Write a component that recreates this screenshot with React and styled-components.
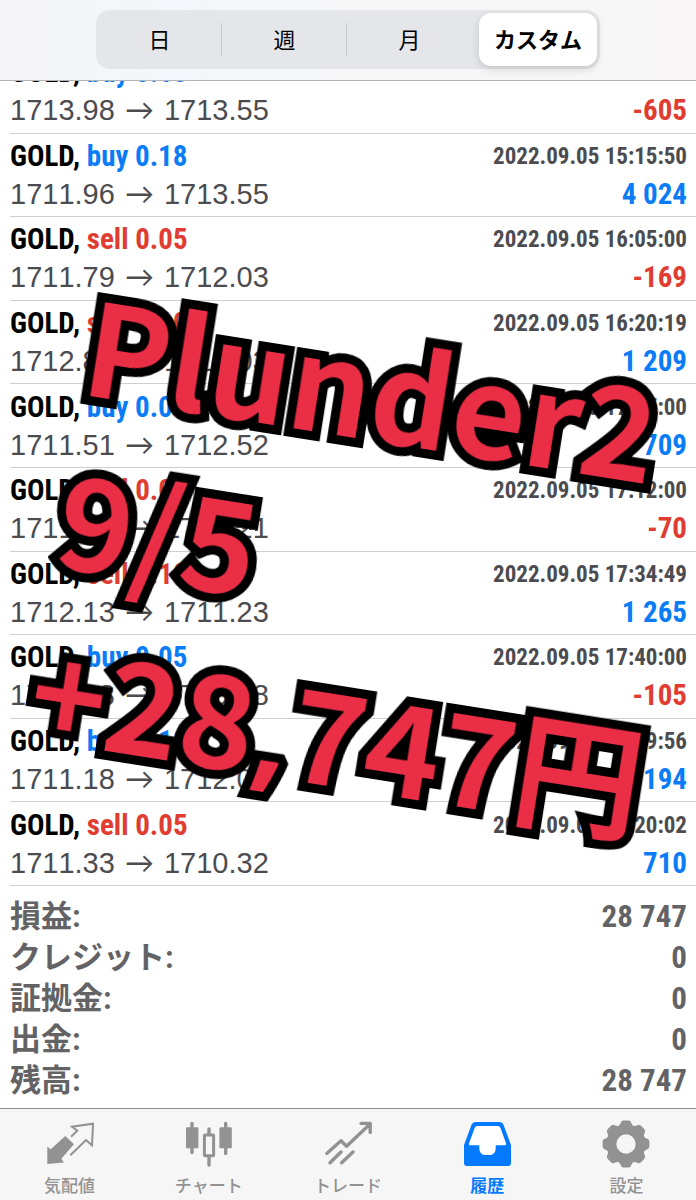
import React, { useState } from 'react'
import styled, { createGlobalStyle } from 'styled-components'

const colors = {
  buy: '#0a7cf5',
  sell: '#e03c31',
  ink: '#000',
  text: '#4c4c50',
  muted: '#636366',
  tab: '#929292',
  line: '#cfcfd2',
  banner: '#ea2e46',
}

const fonts = {
  ui: "'Liberation Sans', 'Noto Sans CJK JP', sans-serif",
  narrow: "'Roboto Condensed', 'Noto Sans CJK JP', sans-serif",
  jp: "'Noto Sans CJK JP', sans-serif",
}

const GlobalStyle = createGlobalStyle`
  * {
    box-sizing: border-box;
  }
  body {
    margin: 0;
    background: #fff;
    font-family: ${fonts.ui};
  }
`

const Page = styled.div`
  position: relative;
  display: flex;
  flex-direction: column;
  min-height: 100vh;
  overflow: hidden;
`

const Header = styled.header`
  position: sticky;
  top: 0;
  z-index: 1;
  display: flex;
  justify-content: center;
  height: 81px;
  padding: 10px 16px;
  background: linear-gradient(90deg, #f5f5f7, #f3f6fa 25%, #f6f6f7 50%, #f8f6f6);
  border-bottom: 1px solid #b4b4b6;
`

const Segments = styled.div`
  display: grid;
  grid-template-columns: repeat(4, 1fr);
  width: 100%;
  max-width: 504px;
  height: 59px;
  padding: 3px 3px 3px 1px;
  border-radius: 14px;
  background: #e5e6e9;
`

const Segment = styled.button`
  position: relative;
  padding: 0 0 4px;
  border: 0;
  border-radius: 12px;
  background: ${(p) => (p.$active ? '#fff' : 'transparent')};
  box-shadow: ${(p) => (p.$active ? '0 3px 8px rgba(0, 0, 0, 0.14)' : 'none')};
  color: ${colors.ink};
  font-family: ${fonts.jp};
  font-size: 22px;
  font-weight: ${(p) => (p.$active ? 700 : 400)};
  line-height: 32px;
  margin-left: ${(p) => (p.$active ? '7px' : 0)};

  &::after {
    content: '';
    position: absolute;
    top: 10px;
    right: 0;
    bottom: 10px;
    width: 1px;
    background: ${(p) => (p.$divider ? '#c8c9cc' : 'transparent')};
  }
`

const Deals = styled.ul`
  display: flex;
  flex: 1;
  flex-direction: column;
  margin: -31px 0 0 10px;
  padding: 0;
  list-style: none;
`

const Deal = styled.li`
  display: flex;
  flex: 1;
  flex-direction: column;
  justify-content: center;
  padding-right: 9px;
  border-bottom: 1px solid ${colors.line};
`

const Line = styled.div`
  display: flex;
  justify-content: space-between;
  height: 38px;
  line-height: 38px;
  white-space: nowrap;
`

const Symbol = styled.span`
  color: ${colors.ink};
  font-family: ${fonts.narrow};
  font-size: 29px;
  font-weight: 700;
`

const Side = styled.span`
  color: ${(p) => colors[p.$side]};
`

const Time = styled.time`
  color: ${colors.text};
  font-family: ${fonts.narrow};
  font-size: 23px;
  font-weight: 700;
  line-height: 40px;
`

const Prices = styled.span`
  color: ${colors.text};
  font-size: 29px;
  font-kerning: none;
  line-height: 36px;
`

const Arrow = styled.span`
  margin: 0 2px;
  font-family: Lato, sans-serif;
`

const Profit = styled.span`
  color: ${(p) => (p.$loss ? colors.sell : colors.buy)};
  font-family: ${fonts.narrow};
  font-size: 29px;
  font-weight: 700;
`

const Summary = styled.dl`
  margin: 0;
  padding: 10px 9px 7px 10px;
`

const SummaryRow = styled.div`
  display: flex;
  justify-content: space-between;
  height: 41px;
  color: ${colors.muted};
  font-family: ${fonts.narrow};
  font-size: 31px;
  font-weight: 700;
  line-height: 41px;

  dd {
    margin: 0;
  }
`

const TabBar = styled.nav`
  display: grid;
  grid-template-columns: repeat(5, 1fr);
  height: 92px;
  border-top: 1px solid #8e8e90;
  background: #f6f6f7;
`

const Tab = styled.a`
  display: flex;
  flex-direction: column;
  align-items: center;
  gap: 3px;
  padding-top: 11px;
  color: ${(p) => (p.$active ? '#057aff' : colors.tab)};
  font-family: ${fonts.jp};
  font-size: 17px;
  font-weight: ${(p) => (p.$active ? 700 : 500)};
  line-height: 28px;
  text-decoration: none;
`

const Banner = styled.div`
  position: absolute;
  z-index: 2;
  top: 254px;
  left: 101px;
  transform: rotate(9deg);
  transform-origin: 0 0;
  color: ${colors.banner};
  font-family: ${fonts.jp};
  font-size: 128px;
  font-weight: 700;
  line-height: 174px;
  white-space: pre;
  pointer-events: none;
  -webkit-text-stroke: 18px #000;
  paint-order: stroke fill;
`

const Comma = styled.span`
  font-family: 'Noto Sans', sans-serif;
`

const QuotesIcon = () => (
  <svg width="48" height="48" viewBox="0 0 48 48" aria-hidden="true">
    <path
      d="M1.3 44V26.7l3.4 2.6L19.3 16l8.7 8.3-12.7 14.4L18 42.4z"
      fill="currentColor"
    />
    <path
      d="M25 16.7l6.3-6-5.3-4L47 3.7l-1 21.6-6-5.3-15.7 15.3"
      fill="none"
      stroke="currentColor"
      strokeWidth="2"
    />
  </svg>
)

const ChartIcon = () => (
  <svg width="48" height="48" viewBox="0 0 48 48" fill="none" stroke="currentColor" aria-hidden="true">
    <path
      d="M7 3.5v29M24 9v5M24 37v8M40.7 3.5v30"
      strokeWidth="3.4"
      strokeLinecap="round"
    />
    <rect x="1" y="7.3" width="12.4" height="21" rx="1" fill="currentColor" stroke="none" />
    <rect x="34.4" y="7.3" width="12.4" height="21" rx="1" fill="currentColor" stroke="none" />
    <rect x="19.4" y="14.9" width="9.2" height="20.8" rx="0.5" strokeWidth="3" />
  </svg>
)

const TradeIcon = () => (
  <svg
    width="48"
    height="48"
    viewBox="0 0 48 48"
    fill="none"
    stroke="currentColor"
    strokeWidth="3.4"
    strokeLinecap="round"
    strokeLinejoin="round"
    aria-hidden="true"
  >
    <path d="M3 33.3L17 20.8l5.6 5.4L46 4M37 3.4h9.2v9" />
    <path d="M6 42.8L17 32M17.6 42.8L29 32" />
  </svg>
)

const HistoryIcon = () => (
  <svg width="48" height="48" viewBox="0 0 48 48" aria-hidden="true">
    <path
      d="M1 43V25L8.4 5Q9.6 2 13 2h23q3.4 0 4.6 3L48 25v18q0 3-3 3H4q-3 0-3-3z"
      fill="currentColor"
    />
    <path
      d="M14.4 6h20.4q2 0 2.7 2l5.6 15.4q.5 1.8-1 1.8h-9.4v3q0 6.8-6.6 6.8h-3.2q-6.6 0-6.6-6.8v-3H7q-1.6 0-1-1.8L11.7 8q.7-2 2.7-2z"
      fill="#fff"
    />
  </svg>
)

const TEETH = [0, 45, 90, 135, 180, 225, 270, 315]

const SettingsIcon = () => (
  <svg width="48" height="48" viewBox="-24 -24 48 48" aria-hidden="true">
    <circle r="14.6" fill="none" stroke="currentColor" strokeWidth="9.8" />
    {TEETH.map((angle) => (
      <path
        key={angle}
        d="M-8.6-17Q-5.8-19-5.2-21.2-4.6-23.4-2.6-23.4H2.6Q4.6-23.4 5.2-21.2 5.8-19 8.6-17z"
        fill="currentColor"
        transform={`rotate(${angle})`}
      />
    ))}
  </svg>
)

const periods = ['日', '週', '月', 'カスタム']

const deals = [
  { side: 'buy', lots: '0.18', open: '1713.98', close: '1713.55', time: '2022.09.05 15:10:00', profit: '-605' },
  { side: 'buy', lots: '0.18', open: '1711.96', close: '1713.55', time: '2022.09.05 15:15:50', profit: '4 024' },
  { side: 'sell', lots: '0.05', open: '1711.79', close: '1712.03', time: '2022.09.05 16:05:00', profit: '-169' },
  { side: 'sell', lots: '0.10', open: '1712.89', close: '1712.03', time: '2022.09.05 16:20:19', profit: '1 209' },
  { side: 'buy', lots: '0.05', open: '1711.51', close: '1712.52', time: '2022.09.05 17:07:00', profit: '709' },
  { side: 'sell', lots: '0.05', open: '1711.11', close: '1711.21', time: '2022.09.05 17:12:00', profit: '-70' },
  { side: 'sell', lots: '0.10', open: '1712.13', close: '1711.23', time: '2022.09.05 17:34:49', profit: '1 265' },
  { side: 'buy', lots: '0.05', open: '1711.13', close: '1710.98', time: '2022.09.05 17:40:00', profit: '-105' },
  { side: 'buy', lots: '0.10', open: '1711.18', close: '1712.03', time: '2022.09.05 18:09:56', profit: '1 194' },
  { side: 'sell', lots: '0.05', open: '1711.33', close: '1710.32', time: '2022.09.05 18:20:02', profit: '710' },
]

const totals = [
  ['損益:', '28 747'],
  ['クレジット:', '0'],
  ['証拠金:', '0'],
  ['出金:', '0'],
  ['残高:', '28 747'],
]

const tabs = [
  { label: '気配値', href: '#quotes', Icon: QuotesIcon },
  { label: 'チャート', href: '#chart', Icon: ChartIcon },
  { label: 'トレード', href: '#trade', Icon: TradeIcon },
  { label: '履歴', href: '#history', Icon: HistoryIcon, active: true },
  { label: '設定', href: '#settings', Icon: SettingsIcon },
]

const DealItem = ({ side, lots, open, close, time, profit }) => (
  <Deal>
    <Line>
      <Symbol>
        GOLD, <Side $side={side}>{`${side} ${lots}`}</Side>
      </Symbol>
      <Time>{time}</Time>
    </Line>
    <Line>
      <Prices>
        {open} <Arrow>→</Arrow> {close}
      </Prices>
      <Profit $loss={profit.startsWith('-')}>{profit}</Profit>
    </Line>
  </Deal>
)

const App = () => {
  const [period, setPeriod] = useState(3)

  return (
    <Page>
      <GlobalStyle />
      <Header>
        <Segments>
          {periods.map((label, i) => (
            <Segment
              key={label}
              type="button"
              aria-pressed={i === period}
              $active={i === period}
              $divider={i < 3 && i !== period && i + 1 !== period}
              onClick={() => setPeriod(i)}
            >
              {label}
            </Segment>
          ))}
        </Segments>
      </Header>
      <Deals>
        {deals.map((deal) => (
          <DealItem key={deal.time} {...deal} />
        ))}
      </Deals>
      <Summary>
        {totals.map(([label, value]) => (
          <SummaryRow key={label}>
            <dt>{label}</dt>
            <dd>{value}</dd>
          </SummaryRow>
        ))}
      </Summary>
      <TabBar>
        {tabs.map(({ label, href, Icon, active }) => (
          <Tab key={label} href={href} $active={active} aria-current={active ? 'page' : undefined}>
            <Icon />
            {label}
          </Tab>
        ))}
      </TabBar>
      <Banner>
        {'Plunder2\n9/5\n+28'}
        <Comma>,</Comma>
        747円
      </Banner>
    </Page>
  )
}

export default App
